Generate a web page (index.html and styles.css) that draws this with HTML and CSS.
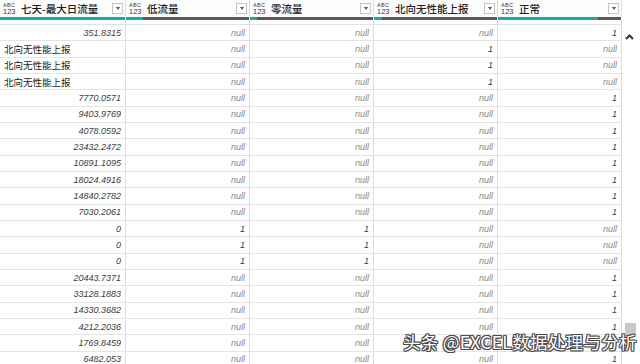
FILE: index.html
```html
<!DOCTYPE html>
<html lang="zh">
<head>
<meta charset="utf-8">
<title>Power Query</title>
<link rel="stylesheet" href="styles.css">
</head>
<body>
<div class="table">
  <div class="head">
    <div class="hcell"><span class="type"><span class="t1">ABC</span><span class="t2">123</span></span><span class="title">七天-最大日流量</span><span class="dd"></span></div>
    <div class="hcell"><span class="type"><span class="t1">ABC</span><span class="t2">123</span></span><span class="title">低流量</span><span class="dd"></span></div>
    <div class="hcell"><span class="type"><span class="t1">ABC</span><span class="t2">123</span></span><span class="title">零流量</span><span class="dd"></span></div>
    <div class="hcell"><span class="type"><span class="t1">ABC</span><span class="t2">123</span></span><span class="title">北向无性能上报</span><span class="dd"></span></div>
    <div class="hcell"><span class="type"><span class="t1">ABC</span><span class="t2">123</span></span><span class="title">正常</span><span class="dd"></span></div>
  </div>
  <div class="bars">
    <div class="bar" style="--v:100%"></div>
    <div class="bar" style="--v:14%"></div>
    <div class="bar" style="--v:6%"></div>
    <div class="bar" style="--v:6.5%"></div>
    <div class="bar" style="--v:81%"></div>
  </div>
  <div class="view">
    <div class="rows">
      <div class="row"><div class="num">5563.2047</div><div class="nul">null</div><div class="nul">null</div><div class="nul">null</div><div class="num">1</div></div>
      <div class="row"><div class="num">351.8315</div><div class="nul">null</div><div class="nul">null</div><div class="nul">null</div><div class="num">1</div></div>
      <div class="row"><div class="txt">北向无性能上报</div><div class="nul">null</div><div class="nul">null</div><div class="num">1</div><div class="nul">null</div></div>
      <div class="row"><div class="txt">北向无性能上报</div><div class="nul">null</div><div class="nul">null</div><div class="num">1</div><div class="nul">null</div></div>
      <div class="row"><div class="txt">北向无性能上报</div><div class="nul">null</div><div class="nul">null</div><div class="num">1</div><div class="nul">null</div></div>
      <div class="row"><div class="num">7770.0571</div><div class="nul">null</div><div class="nul">null</div><div class="nul">null</div><div class="num">1</div></div>
      <div class="row"><div class="num">9403.9769</div><div class="nul">null</div><div class="nul">null</div><div class="nul">null</div><div class="num">1</div></div>
      <div class="row"><div class="num">4078.0592</div><div class="nul">null</div><div class="nul">null</div><div class="nul">null</div><div class="num">1</div></div>
      <div class="row"><div class="num">23432.2472</div><div class="nul">null</div><div class="nul">null</div><div class="nul">null</div><div class="num">1</div></div>
      <div class="row"><div class="num">10891.1095</div><div class="nul">null</div><div class="nul">null</div><div class="nul">null</div><div class="num">1</div></div>
      <div class="row"><div class="num">18024.4916</div><div class="nul">null</div><div class="nul">null</div><div class="nul">null</div><div class="num">1</div></div>
      <div class="row"><div class="num">14840.2782</div><div class="nul">null</div><div class="nul">null</div><div class="nul">null</div><div class="num">1</div></div>
      <div class="row"><div class="num">7030.2061</div><div class="nul">null</div><div class="nul">null</div><div class="nul">null</div><div class="num">1</div></div>
      <div class="row"><div class="num">0</div><div class="num">1</div><div class="num">1</div><div class="nul">null</div><div class="nul">null</div></div>
      <div class="row"><div class="num">0</div><div class="num">1</div><div class="num">1</div><div class="nul">null</div><div class="nul">null</div></div>
      <div class="row"><div class="num">0</div><div class="num">1</div><div class="num">1</div><div class="nul">null</div><div class="nul">null</div></div>
      <div class="row"><div class="num">20443.7371</div><div class="nul">null</div><div class="nul">null</div><div class="nul">null</div><div class="num">1</div></div>
      <div class="row"><div class="num">33128.1883</div><div class="nul">null</div><div class="nul">null</div><div class="nul">null</div><div class="num">1</div></div>
      <div class="row"><div class="num">14330.3682</div><div class="nul">null</div><div class="nul">null</div><div class="nul">null</div><div class="num">1</div></div>
      <div class="row"><div class="num">4212.2036</div><div class="nul">null</div><div class="nul">null</div><div class="nul">null</div><div class="num">1</div></div>
      <div class="row"><div class="num">1769.8459</div><div class="nul">null</div><div class="nul">null</div><div class="nul">null</div><div class="num">1</div></div>
      <div class="row"><div class="num">6482.053</div><div class="nul">null</div><div class="nul">null</div><div class="nul">null</div><div class="num">1</div></div>
    </div>
  </div>
</div>
<div class="sb">
  <svg class="up" width="9" height="6" viewBox="0 0 9 6"><path d="M1 5 L4.5 1.5 L8 5" fill="none" stroke="#333" stroke-width="2"/></svg>
  <div class="thumb"></div>
</div>
<div class="watermark">头条 @EXCEL数据处理与分析</div>
</body>
</html>
```

FILE: styles.css
```css
html, body {
  margin: 0;
  padding: 0;
}
body {
  width: 640px;
  height: 364px;
  overflow: hidden;
  background: #fff;
  font-family: "Liberation Sans", Arial, sans-serif;
  display: flex;
  position: relative;
}
.table {
  width: 622px;
  height: 364px;
  display: flex;
  flex-direction: column;
}
.head, .bars, .row {
  display: grid;
  grid-template-columns: 126px repeat(4, 124px);
}
.head {
  height: 17px;
  background: #fcfcfc;
}
.hcell {
  display: flex;
  align-items: center;
  border-right: 1px solid #dcdcdc;
  padding: 0 2px 0 3px;
  min-width: 0;
}
.type {
  display: flex;
  flex-direction: column;
  width: 13px;
  color: #3a3a3a;
  font-family: "Liberation Sans", Arial, sans-serif;
}
.t1 {
  font-size: 5.5px;
  line-height: 6px;
  letter-spacing: 0.3px;
}
.t2 {
  font-size: 7.5px;
  line-height: 7px;
}
.title {
  margin-left: 5px;
  font-family: "Noto Sans CJK SC", sans-serif;
  font-size: 10.5px;
  line-height: 13px;
  font-weight: 500;
  color: #1e1e1e;
  white-space: nowrap;
}
.dd {
  margin-left: auto;
  flex: none;
  width: 9px;
  height: 9px;
  border: 1px solid #c4c4c4;
  background: #fff;
  display: flex;
  align-items: center;
  justify-content: center;
}
.dd::after {
  content: "";
  border-left: 2.5px solid transparent;
  border-right: 2.5px solid transparent;
  border-top: 3px solid #555;
}
.bars {
  height: 3px;
}
.bar {
  margin-right: 1px;
  background: linear-gradient(to right, #17aca3 var(--v), #595959 var(--v));
}
.view {
  flex: 1;
  overflow: hidden;
}
.rows {
  margin-top: -11.5px;
}
.row {
  height: 16.35px;
}
.row > div {
  box-sizing: border-box;
  border-right: 1px solid #dcdcdc;
  border-bottom: 1px solid #e4e4e4;
  display: flex;
  align-items: center;
  justify-content: flex-end;
  padding: 0 4px;
  overflow: hidden;
  white-space: nowrap;
}
.row > .num {
  font-style: italic;
  font-size: 9px;
  color: #3c3c3c;
}
.row > .nul {
  font-style: italic;
  font-size: 9px;
  color: #8a8a8a;
}
.row > .txt {
  justify-content: flex-start;
  font-family: "Noto Sans CJK SC", sans-serif;
  font-size: 9.5px;
  color: #222;
}
.sb {
  width: 18px;
  height: 364px;
  box-sizing: border-box;
  display: flex;
  flex-direction: column;
  align-items: flex-start;
  padding: 34px 0 28px 3px;
}
.up {
  display: block;
}
.thumb {
  margin-top: auto;
  width: 11px;
  height: 13px;
  background: #c8c8c8;
}
.watermark {
  position: absolute;
  left: 403px;
  top: 331px;
  font-family: "Noto Sans CJK SC", sans-serif;
  font-size: 17.5px;
  letter-spacing: 0.3px;
  line-height: 22px;
  color: #fff;
  white-space: nowrap;
  text-shadow: 1px 0 0 #4a4a4a, -1px 0 0 #4a4a4a, 0 1px 0 #4a4a4a, 0 -1px 0 #4a4a4a, 1px 1px 0 #4a4a4a, -1px -1px 0 #4a4a4a, 1px -1px 0 #4a4a4a, -1px 1px 0 #4a4a4a;
}
```
